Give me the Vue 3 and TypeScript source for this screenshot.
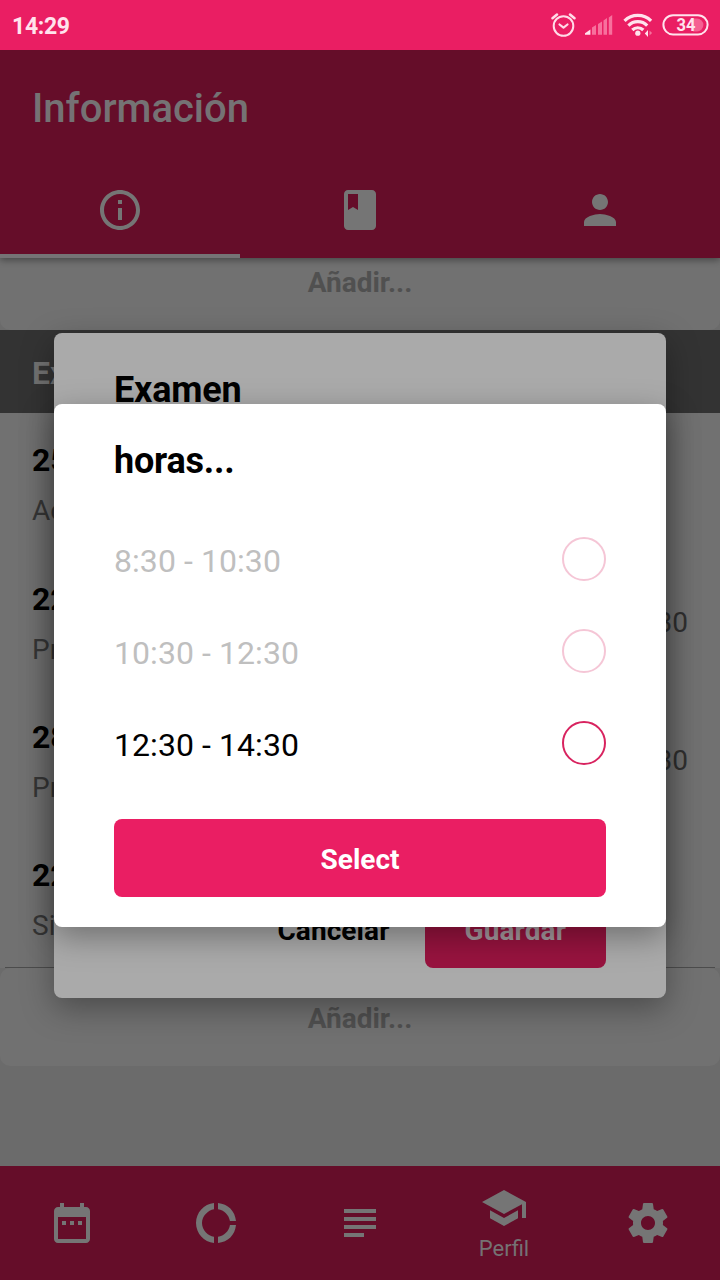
<script setup lang="ts">
import { ref } from 'vue'

interface Exam {
  day: string
  kind: string
  time?: string
}

interface Slot {
  label: string
  disabled: boolean
}

const tabs = [
  'M11 17h2v-6h-2v6zm1-15C6.48 2 2 6.48 2 12s4.48 10 10 10 10-4.48 10-10S17.52 2 12 2zm0 18c-4.41 0-8-3.59-8-8s3.59-8 8-8 8 3.59 8 8-3.59 8-8 8zM11 9h2V7h-2v2z',
  'M18 2H6c-1.1 0-2 .9-2 2v16c0 1.1.9 2 2 2h12c1.1 0 2-.9 2-2V4c0-1.1-.9-2-2-2zM6 4h5v8l-2.5-1.5L6 12V4z',
  'M12 12c2.21 0 4-1.79 4-4s-1.79-4-4-4-4 1.79-4 4 1.79 4 4 4zm0 2c-2.67 0-8 1.34-8 4v2h16v-2c0-2.66-5.33-4-8-4z',
]

const navItems: { icon: string; label?: string }[] = [
  { icon: 'M9 11H7v2h2v-2zm4 0h-2v2h2v-2zm4 0h-2v2h2v-2zm2-7h-1V2h-2v2H8V2H6v2H5c-1.11 0-1.99.9-1.99 2L3 20c0 1.1.89 2 2 2h14c1.1 0 2-.9 2-2V6c0-1.1-.9-2-2-2zm0 16H5V9h14v11z' },
  { icon: 'M11 5.08V2c-5 .5-9 4.81-9 10s4 9.5 9 10v-3.08c-3-.48-6-3.4-6-6.92s3-6.44 6-6.92zM18.97 11H22c-.47-5-4-8.53-9-9v3.08C16 5.51 18.54 8 18.97 11zM13 18.92V22c5-.47 8.53-4 9-9h-3.03c-.43 3-2.97 5.49-5.97 5.92z' },
  { icon: 'M14 17H4v2h10v-2zm6-8H4v2h16V9zM4 15h16v-2H4v2zM4 5v2h16V5H4z' },
  { icon: 'M5 13.18v4L12 21l7-3.82v-4L12 17l-7-3.82zM12 3L1 9l11 6 9-4.91V17h2V9L12 3z', label: 'Perfil' },
  { icon: 'M19.43 12.98c.04-.32.07-.64.07-.98s-.03-.66-.07-.98l2.11-1.65c.19-.15.24-.42.12-.64l-2-3.46c-.12-.22-.39-.3-.61-.22l-2.49 1c-.52-.4-1.08-.73-1.69-.98l-.38-2.65C14.46 2.18 14.25 2 14 2h-4c-.25 0-.46.18-.49.42l-.38 2.65c-.61.25-1.17.59-1.69.98l-2.49-1c-.23-.09-.49 0-.61.22l-2 3.46c-.13.22-.07.49.12.64l2.11 1.65c-.04.32-.07.65-.07.98s.03.66.07.98l-2.11 1.65c-.19.15-.24.42-.12.64l2 3.46c.12.22.39.3.61.22l2.49-1c.52.4 1.08.73 1.69.98l.38 2.65c.03.24.24.42.49.42h4c.25 0 .46-.18.49-.42l.38-2.65c.61-.25 1.17-.59 1.69-.98l2.49 1c.23.09.49 0 .61-.22l2-3.46c.12-.22.07-.49-.12-.64l-2.11-1.65zM12 15.5c-1.93 0-3.5-1.57-3.5-3.5s1.57-3.5 3.5-3.5 3.5 1.57 3.5 3.5-1.57 3.5-3.5 3.5z' },
]

const exams: Exam[] = [
  { day: '25', kind: 'Ac' },
  { day: '22', kind: 'Pr', time: '30' },
  { day: '28', kind: 'Pr', time: '30' },
  { day: '22', kind: 'Si' },
]

const slots: Slot[] = [
  { label: '8:30 - 10:30', disabled: true },
  { label: '10:30 - 12:30', disabled: true },
  { label: '12:30 - 14:30', disabled: false },
]

const activeTab = ref(0)
</script>

<template>
  <div class="screen">
    <div class="status">
      <span class="clock">14:29</span>
      <svg class="status-icons" width="160" height="30" viewBox="0 0 160 30" fill="none">
        <g stroke="#ffdbe8" stroke-width="2" stroke-linecap="round" stroke-linejoin="round">
          <circle cx="13.5" cy="16" r="9.8" />
          <path d="M9.5 14.5l4 3.2 4-3.2" stroke-width="2.2" />
          <path d="M2.5 8.2L7 4.6M24.5 8.2L20 4.6" stroke-width="2.6" />
        </g>
        <path d="M35 24.8v-1.6l5.4-3.7v5.3z" fill="#ffe3ed" />
        <path d="M42 24.8v-7.4l4-2.5v9.9zM48 24.8V14l4-2.6v13.4zM53.5 24.8V10.5l3.5-2.4v16.7zM58.8 24.8V7.4l3.4-2.3v19.7z" fill="#f7709d" />
        <g stroke="#ffe3ed" stroke-width="3.2">
          <path d="M74.5 10.8a19 19 0 0 1 26.6 0" />
          <path d="M78.4 15.6a13.2 13.2 0 0 1 18.8 0" />
          <path d="M82.3 20a7.8 7.8 0 0 1 11 0" />
        </g>
        <circle cx="87.8" cy="23.2" r="2.6" fill="#ffe3ed" />
        <path d="M98 20v7L94.8 23.6z" fill="#ffe3ed" />
        <path d="M99.5 20.5v5l2.6-2.5z" fill="#f7709d" />
        <rect x="113.4" y="5.2" width="44.2" height="19.2" rx="9.6" stroke="#ffe3ed" stroke-width="2" />
        <path d="M143 8.6h4a6.4 6.4 0 0 1 0 12.8h-4z" fill="#f7709d" opacity=".8" />
        <text x="126.4" y="21.4" textLength="19" lengthAdjust="spacingAndGlyphs" class="battery">34</text>
      </svg>
    </div>

    <header class="header">
      <h1 class="title">Información</h1>
      <div class="tabs">
        <div v-for="(icon, i) in tabs" :key="i" class="tab" :class="{ active: i === activeTab }">
          <svg class="icon" viewBox="0 0 24 24"><path :d="icon" /></svg>
        </div>
      </div>
    </header>

    <main class="content">
      <div class="scrolled">
        <div class="add">Añadir...</div>
        <h2 class="section">Ex</h2>
        <div class="list">
          <div v-for="(exam, i) in exams" :key="i" class="exam">
            <div class="exam-main">
              <span class="day">{{ exam.day }}</span>
              <span class="kind">{{ exam.kind }}</span>
            </div>
            <span v-if="exam.time" class="time">{{ exam.time }}</span>
          </div>
          <div class="divider"></div>
        </div>
        <div class="add">Añadir...</div>
      </div>
    </main>

    <nav class="nav">
      <div v-for="(item, i) in navItems" :key="i" class="nav-item">
        <svg class="icon" viewBox="0 0 24 24"><path :d="item.icon" /></svg>
        <span v-if="item.label" class="nav-label">{{ item.label }}</span>
      </div>
    </nav>

    <div class="overlay">
      <div class="dialog dialog-back">
        <h3 class="dialog-title">Examen</h3>
        <div class="actions">
          <span class="cancel">Cancelar</span>
          <span class="save">Guardar</span>
        </div>
      </div>
    </div>

    <div class="overlay">
      <div class="dialog dialog-front">
        <h3 class="dialog-title">horas...</h3>
        <div class="slots">
          <div v-for="slot in slots" :key="slot.label" class="slot" :class="{ disabled: slot.disabled }">
            <span>{{ slot.label }}</span>
            <i class="radio"></i>
          </div>
        </div>
        <div class="select">Select</div>
      </div>
    </div>
  </div>
</template>

<style>
body {
  margin: 0;
}
</style>

<style scoped>
.screen {
  position: relative;
  display: flex;
  flex-direction: column;
  width: 720px;
  height: 1280px;
  overflow: hidden;
  background: #6b6b6b;
  font-family: Roboto, "Liberation Sans", sans-serif;
}

.status {
  display: flex;
  align-items: center;
  justify-content: space-between;
  flex: none;
  height: 50px;
  box-sizing: border-box;
  padding: 0 10px 0 12px;
  background: #ea1e63;
}

.clock {
  padding-top: 2px;
  font-size: 23px;
  font-weight: 700;
  letter-spacing: -0.3px;
  color: #ffe3ed;
}

.battery {
  font-size: 18.5px;
  font-weight: 700;
  fill: #ffe3ed;
}

.header {
  position: relative;
  z-index: 1;
  flex: none;
  background: #650d29;
  box-shadow: 0 2px 7px rgba(0, 0, 0, 0.4);
  clip-path: inset(0 0 -20px);
}

.title {
  margin: 0;
  padding: 2px 32px 0;
  height: 110px;
  line-height: 114px;
  font-size: 40px;
  font-weight: 500;
  color: #757274;
}

.tabs {
  display: flex;
  height: 96px;
}

.tab {
  display: flex;
  flex: 1;
  align-items: center;
  justify-content: center;
}

.tab.active {
  box-shadow: inset 0 -4px #757375;
}

.icon {
  display: block;
  width: 48px;
  height: 48px;
  fill: #757575;
}

.content {
  flex: 1;
  min-height: 0;
  overflow: hidden;
}

.scrolled {
  margin-top: -26px;
}

.add {
  height: 98px;
  border-radius: 10px;
  background: #717171;
  line-height: 102px;
  text-align: center;
  font-size: 28px;
  font-weight: 700;
  color: #505050;
}

.section {
  height: 83px;
  margin: 0;
  padding-left: 32px;
  background: #333;
  line-height: 86px;
  font-size: 32px;
  font-weight: 700;
  color: #717171;
}

.list {
  padding-top: 2px;
  background: #717171;
}

.exam {
  display: flex;
  align-items: center;
  justify-content: space-between;
  height: 138px;
  padding: 0 32px;
}

.exam-main {
  display: flex;
  flex-direction: column;
  padding-top: 6px;
}

.exam:first-child .exam-main {
  padding-top: 4px;
}

.day {
  line-height: 50px;
  font-size: 32px;
  font-weight: 700;
  color: #000;
}

.kind {
  line-height: 52px;
  font-size: 28px;
  color: #373737;
}

.time {
  font-size: 28px;
  color: #303030;
}

.divider {
  height: 1px;
  margin: 0 5px;
  background: #4c4c4c;
}

.nav {
  display: flex;
  flex: none;
  height: 114px;
  background: #650d29;
}

.nav-item {
  display: flex;
  flex: 1;
  flex-direction: column;
  align-items: center;
  justify-content: center;
}

.nav-label {
  margin-top: 4px;
  padding-bottom: 1px;
  line-height: 26px;
  font-size: 22px;
  color: #757274;
}

.overlay {
  position: absolute;
  inset: 51px 0 0;
  z-index: 2;
  display: flex;
  align-items: center;
  justify-content: center;
}

.dialog {
  display: flex;
  flex-direction: column;
  box-sizing: border-box;
  width: 612px;
  padding: 30px 60px;
  border-radius: 8px;
}

.dialog-back {
  height: 665px;
  justify-content: space-between;
  background: #aaa;
  box-shadow: 0 10px 32px rgba(0, 0, 0, 0.34);
}

.dialog-front {
  height: 523px;
  background: #fff;
  box-shadow: 0 10px 32px rgba(0, 0, 0, 0.34);
}

.dialog-title {
  flex: none;
  height: 79px;
  margin: 0;
  line-height: 54px;
  font-size: 36px;
  font-weight: 700;
  letter-spacing: -0.2px;
  color: #000;
}

.actions {
  display: flex;
  justify-content: flex-end;
  gap: 35px;
  height: 78px;
  font-size: 28px;
  font-weight: 700;
  line-height: 82px;
  letter-spacing: 0.1px;
}

.save {
  padding: 0 40px;
  border-radius: 8px;
  background: #98133f;
  color: #a79aa0;
}

.slots {
  flex: 1;
}

.slot {
  display: flex;
  align-items: center;
  justify-content: space-between;
  height: 92px;
  line-height: 38px;
  font-size: 32px;
  letter-spacing: 0.07px;
  color: #000;
}

.slot span {
  padding-top: 4px;
}

.radio {
  box-sizing: border-box;
  width: 44px;
  height: 44px;
  border: 2px solid #d8235f;
  border-radius: 50%;
}

.disabled {
  color: #bfbfbf;
}

.disabled .radio {
  border-color: #f5c6d6;
}

.select {
  height: 78px;
  border-radius: 8px;
  background: #ea1e63;
  line-height: 82px;
  text-align: center;
  font-size: 28px;
  font-weight: 700;
  color: #fff;
}
</style>
